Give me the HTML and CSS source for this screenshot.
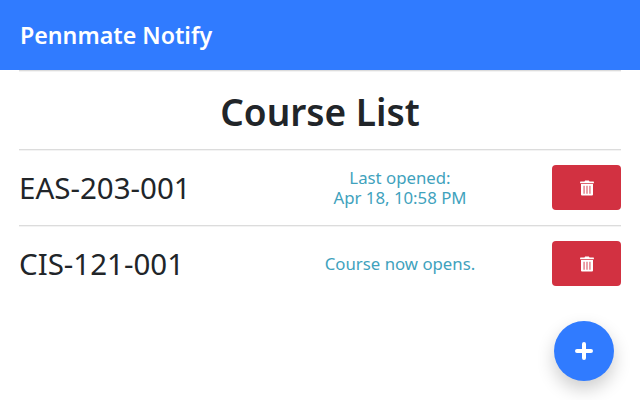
FILE: index.html
```html
<!DOCTYPE html>
<html lang="en">
<head>
  <meta charset="UTF-8">
  <title>Pennmate Notify</title>
  <link rel="stylesheet" href="styles.css">
</head>
<body>

  <header class="navbar">Pennmate Notify</header>

  <main class="content">
    <h1 class="title">Course List</h1>

    <div class="course-row">
      <span class="course-name">EAS-203-001</span>
      <span class="course-status">Last opened:<br>Apr 18, 10:58 PM</span>
      <button class="delete-btn" aria-label="Delete">
        <svg class="trash-icon" viewBox="0 0 14 16"><path fill="#fff" fill-rule="evenodd" d="M.6 1.600h3.900l.6-1.100h3.800l.6 1.100h3.900a.5.5 0 0 1 .5.5v1.100H.1V2.100a.5.5 0 0 1 .5-.5zM1 4.100h12v10.500a1 1 0 0 1-1 1H2a1 1 0 0 1-1-1zm2.600 1.700v7.900h.9V5.800zm2.950 0v7.900h.9V5.800zm2.950 0v7.900h.9V5.800z"/></svg>
      </button>
    </div>

    <div class="course-row">
      <span class="course-name">CIS-121-001</span>
      <span class="course-status">Course now opens.</span>
      <button class="delete-btn" aria-label="Delete">
        <svg class="trash-icon" viewBox="0 0 14 16"><path fill="#fff" fill-rule="evenodd" d="M.6 1.600h3.900l.6-1.100h3.800l.6 1.100h3.900a.5.5 0 0 1 .5.5v1.100H.1V2.100a.5.5 0 0 1 .5-.5zM1 4.100h12v10.500a1 1 0 0 1-1 1H2a1 1 0 0 1-1-1zm2.600 1.700v7.900h.9V5.800zm2.950 0v7.900h.9V5.800zm2.950 0v7.900h.9V5.800z"/></svg>
      </button>
    </div>
  </main>

  <button class="add-btn" aria-label="Add course">
    <svg class="plus-icon" viewBox="0 0 18 18"><path fill="none" stroke="#fff" stroke-width="4" stroke-linecap="round" d="M9 2v14M2 9h14"/></svg>
  </button>

</body>
</html>
```

FILE: styles.css
```css
* {
  box-sizing: border-box;
}
html, body {
  height: 100%;
}
body {
  margin: 0;
  position: relative;
  overflow: hidden;
  font-family: "Noto Sans", "Open Sans", sans-serif;
  background: #fff;
  color: #212529;
}
.navbar {
  height: 70px;
  padding: 0 20px;
  display: flex;
  align-items: center;
  background: #307bff;
  color: #fff;
  font-size: 23.200px;
  font-weight: 600;
}
.content {
  margin: 0 19px;
}
.title {
  height: 80px;
  margin: 0;
  padding-top: 3px;
  border-top: 1px solid #dcdcdc;
  border-bottom: 1px solid #dcdcdc;
  box-shadow: inset 0 1px 0 #f3f3f3, 0 1px 0 #f3f3f3;
  display: flex;
  align-items: center;
  justify-content: center;
  font-size: 37px;
  font-weight: 600;
}
.course-row {
  box-sizing: content-box;
  height: 75px;
  display: grid;
  grid-template-columns: 301px 160px 1fr;
  align-items: center;
}
.course-row + .course-row {
  border-top: 1px solid #dcdcdc;
  box-shadow: inset 0 1px 0 #f3f3f3;
}
.course-name {
  font-size: 29.500px;
}
.course-status {
  text-align: center;
  font-size: 16.800px;
  line-height: 20px;
  color: #3fa2bd;
}
.delete-btn {
  justify-self: end;
  width: 69px;
  height: 45px;
  padding: 0;
  border: none;
  border-radius: 4px;
  background: #d23141;
  display: flex;
  align-items: center;
  justify-content: center;
}
.trash-icon {
  width: 14px;
  height: 16px;
}
.add-btn {
  position: absolute;
  left: 554px;
  top: 321px;
  width: 60px;
  height: 60px;
  padding: 0;
  border: none;
  border-radius: 50%;
  background: #307bff;
  box-shadow: 0 8px 18px rgba(0, 0, 0, 0.2);
  display: flex;
  align-items: center;
  justify-content: center;
}
.plus-icon {
  width: 18px;
  height: 18px;
}
```
